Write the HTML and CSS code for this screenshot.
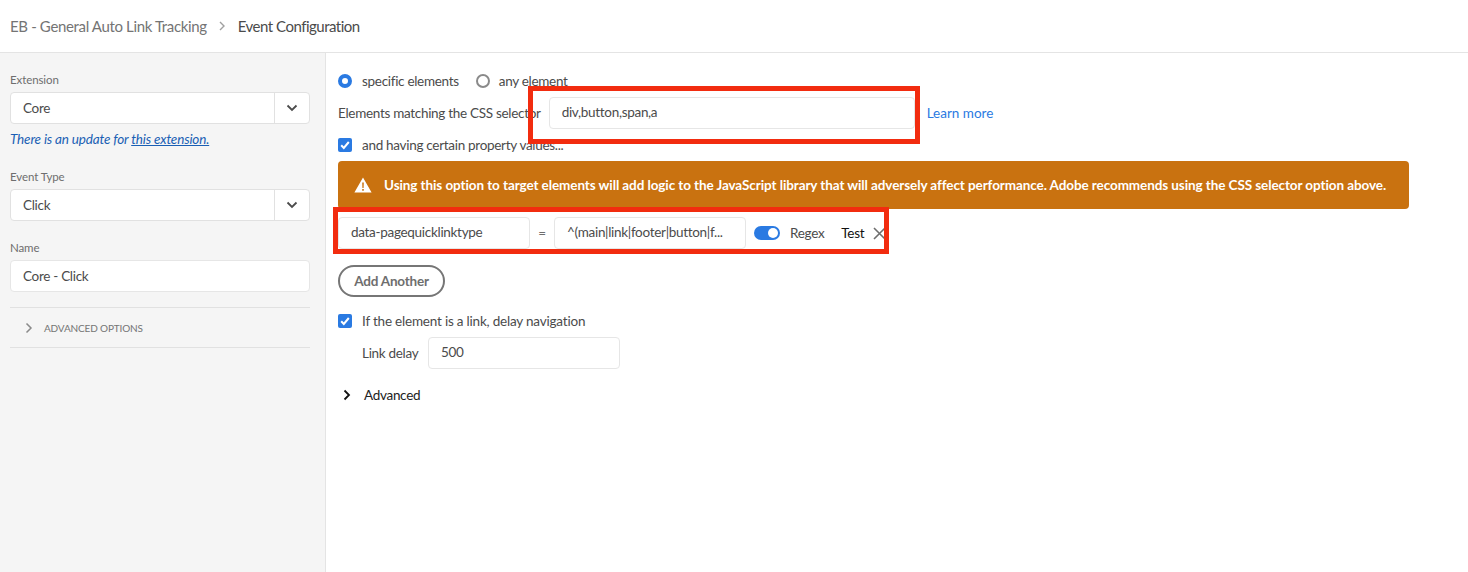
FILE: index.html
```html
<!DOCTYPE html>
<html lang="en">
<head>
<meta charset="utf-8">
<title>Event Configuration</title>
<link rel="stylesheet" href="styles.css">
</head>
<body>
<header class="topbar">
  <span class="crumb">EB - General Auto Link Tracking</span>
  <svg class="crumb-sep" width="8" height="12" viewBox="0 0 8 12"><path d="M2 2l4 4-4 4" fill="none" stroke="#a0a0a0" stroke-width="1.4"/></svg>
  <span class="crumb-current">Event Configuration</span>
</header>
<div class="layout">
  <aside class="sidebar">
    <div class="label">Extension</div>
    <div class="select">
      <span class="select-value">Core</span>
      <span class="select-btn"><svg width="12" height="8" viewBox="0 0 12 8"><path d="M1.500 1.500L6 6l4.500-4.500" fill="none" stroke="#4b4b4b" stroke-width="1.8"/></svg></span>
    </div>
    <div class="update">There is an update for <a href="#">this extension.</a></div>
    <div class="label label-event">Event Type</div>
    <div class="select">
      <span class="select-value">Click</span>
      <span class="select-btn"><svg width="12" height="8" viewBox="0 0 12 8"><path d="M1.500 1.500L6 6l4.500-4.500" fill="none" stroke="#4b4b4b" stroke-width="1.8"/></svg></span>
    </div>
    <div class="label label-name">Name</div>
    <div class="textfield side-field">Core - Click</div>
    <div class="adv-options">
      <svg width="8" height="12" viewBox="0 0 8 12"><path d="M1.500 1.500L6 6l-4.500 4.500" fill="none" stroke="#8a8a8a" stroke-width="1.500"/></svg>
      <span>ADVANCED OPTIONS</span>
    </div>
  </aside>
  <main class="content">
    <div class="row radios">
      <span class="radio radio-on"></span><span class="opt">specific elements</span>
      <span class="radio radio-off"></span><span class="opt">any element</span>
    </div>
    <div class="row selector">
      <span>Elements matching the CSS selector</span>
      <div class="textfield selector-field">div,button,span,a</div>
      <a class="learn" href="#">Learn more</a>
    </div>
    <div class="row check-row">
      <span class="check"><svg width="14" height="14" viewBox="0 0 14 14"><path d="M3.200 7.300l2.600 2.700 5-6" fill="none" stroke="#fff" stroke-width="2"/></svg></span>
      <span>and having certain property values...</span>
    </div>
    <div class="banner">
      <svg width="18" height="16" viewBox="0 0 18 16"><path fill-rule="evenodd" d="M9 0.500l8.600 15H0.400zM8.200 5.500l.2 5.500h1.200l.2-5.500zM8.200 12v1.800h1.600V12z" fill="#fff"/></svg>
      <span>Using this option to target elements will add logic to the JavaScript library that will adversely affect performance. Adobe recommends using the CSS selector option above.</span>
    </div>
    <div class="row prop">
      <div class="textfield prop-name">data-pagequicklinktype</div>
      <span class="equals">=</span>
      <div class="textfield prop-value">^(main|link|footer|button|f...</div>
      <span class="toggle"><span class="knob"></span></span>
      <span class="regex">Regex</span>
      <span class="test">Test</span>
      <svg class="close" width="13" height="13" viewBox="0 0 13 13"><path d="M1 1l11 11M12 1L1 12" stroke="#6e6e6e" stroke-width="1.600" fill="none"/></svg>
    </div>
    <button class="add">Add Another</button>
    <div class="row check-row delay-check">
      <span class="check"><svg width="14" height="14" viewBox="0 0 14 14"><path d="M3.200 7.300l2.600 2.700 5-6" fill="none" stroke="#fff" stroke-width="2"/></svg></span>
      <span>If the element is a link, delay navigation</span>
    </div>
    <div class="row delay">
      <span class="delay-label">Link delay</span>
      <div class="textfield delay-field">500</div>
    </div>
    <div class="row advanced">
      <svg width="8" height="12" viewBox="0 0 8 12"><path d="M1.500 1.500L6 6l-4.500 4.500" fill="none" stroke="#111" stroke-width="1.800"/></svg>
      <span>Advanced</span>
    </div>
  </main>
</div>
<div class="callout callout-selector"></div>
<div class="callout callout-prop"></div>
</body>
</html>
```
FILE: styles.css
```css
* { box-sizing: border-box; }
html, body { height: 100%; }
body {
  margin: 0;
  height: 572px;
  overflow: hidden;
  position: relative;
  background: #fff;
  font-family: "Lato", "Noto Sans", sans-serif;
  font-size: 13.500px;
  letter-spacing: -0.3px;
  color: #4b4b4b;
}
.topbar {
  height: 53px;
  border-bottom: 1px solid #e4e4e4;
  display: flex;
  align-items: center;
  padding-left: 10px;
  font-size: 15px;
  letter-spacing: -0.35px;
}
.crumb { color: #747474; }
.crumb-sep { margin: 0 12px 0 11px; }
.crumb-current { color: #4b4b4b; letter-spacing: -0.5px; }
.layout { display: flex; height: 519px; }
.sidebar {
  width: 326px;
  background: #f5f5f5;
  border-right: 1px solid #e4e4e4;
  padding: 19px 15px 0 10px;
}
.label { font-size: 11.500px; letter-spacing: -0.1px; color: #6e6e6e; line-height: 16px; height: 20px; }
.label-event { margin-top: 21px; }
.label-name { margin-top: 19px; }
.select {
  display: flex;
  height: 32px;
  background: #fff;
  border: 1px solid #e1e1e1;
  border-radius: 4px;
}
.select-value { flex: 1; padding-left: 12px; line-height: 30px; }
.select-btn {
  width: 35px;
  border-left: 1px solid #e1e1e1;
  display: flex;
  align-items: center;
  justify-content: center;
}
.update { margin-top: 6px; font-style: italic; font-size: 13.500px; letter-spacing: -0.16px; line-height: 18px; color: #1a5fb4; }
.update a { color: #1a5fb4; }
.textfield {
  height: 32px;
  background: #fff;
  border: 1px solid #e6e6e6;
  border-radius: 4px;
  padding-left: 12px;
  line-height: 29px;
  white-space: nowrap;
}
.side-field { width: 300px; line-height: 30px; }
.adv-options {
  margin-top: 15px;
  height: 41px;
  border-top: 1px solid #e1e1e1;
  border-bottom: 1px solid #e1e1e1;
  display: flex;
  align-items: center;
  gap: 11px;
  padding-left: 15px;
  font-size: 10px;
  letter-spacing: -0.15px;
  color: #747474;
}
.content { flex: 1; padding: 17px 0 0 12px; }
.row { display: flex; align-items: center; }
.radios { height: 22px; }
.radio { width: 14px; height: 14px; border-radius: 50%; }
.radio-on { background: #fff; border: 4px solid #2a7ae2; }
.radio-off { border: 2px solid #8a8a8a; margin-left: 17px; }
.opt { margin-left: 9px; }
.radio-on + .opt { margin-left: 10px; }
.selector { margin-top: 5px; height: 32px; }
.selector-field { width: 366px; margin-left: 8px; }
.learn { margin-left: 12px; color: #2a7ae2; text-decoration: none; letter-spacing: 0; }
.check-row { margin-top: 8px; height: 16px; }
.check {
  width: 14px;
  height: 14px;
  border-radius: 2px;
  background: #2a7ae2;
  margin-right: 10px;
  display: flex;
}
.banner {
  width: 1071px;
  height: 48px;
  margin-top: 8px;
  background: #c97210;
  border-radius: 4px;
  color: #fff;
  font-weight: 700;
  font-size: 13.500px;
  letter-spacing: -0.09px;
  display: flex;
  align-items: center;
  gap: 12px;
  padding-left: 16px;
  white-space: nowrap;
}
.prop { margin-top: 8px; height: 32px; }
.prop-name { width: 192px; }
.equals { width: 24px; text-align: center; color: #6e6e6e; }
.prop-value { width: 192px; }
.toggle {
  width: 26px;
  height: 14px;
  border-radius: 7px;
  background: #2a7ae2;
  margin-left: 8px;
  display: flex;
  align-items: center;
  justify-content: flex-end;
  padding-right: 2px;
}
.knob { width: 10px; height: 10px; border-radius: 50%; background: #fff; }
.regex { margin-left: 10px; }
.test { margin-left: 17px; color: #111; }
.close { margin-left: 9px; }
.add {
  display: block;
  margin-top: 16px;
  width: 107px;
  height: 32px;
  border: 2px solid #767676;
  border-radius: 16px;
  background: #fff;
  color: #6e6e6e;
  font: 700 13.500px "Lato", "Noto Sans", sans-serif;
  letter-spacing: -0.2px;
  padding: 0;
}
.delay-check { margin-top: 16px; letter-spacing: -0.2px; }
.delay { margin-top: 8px; height: 32px; padding-left: 24px; }
.delay-label { width: 58px; }
.delay-field { width: 192px; margin-left: 8px; }
.advanced { margin-top: 18px; height: 16px; gap: 13px; padding-left: 5px; color: #222; }
.callout { position: absolute; border: 5px solid #f22c0f; }
.callout-selector { left: 528px; top: 86px; width: 392px; height: 58px; }
.callout-prop { left: 333px; top: 207px; width: 556px; height: 47px; }
```
